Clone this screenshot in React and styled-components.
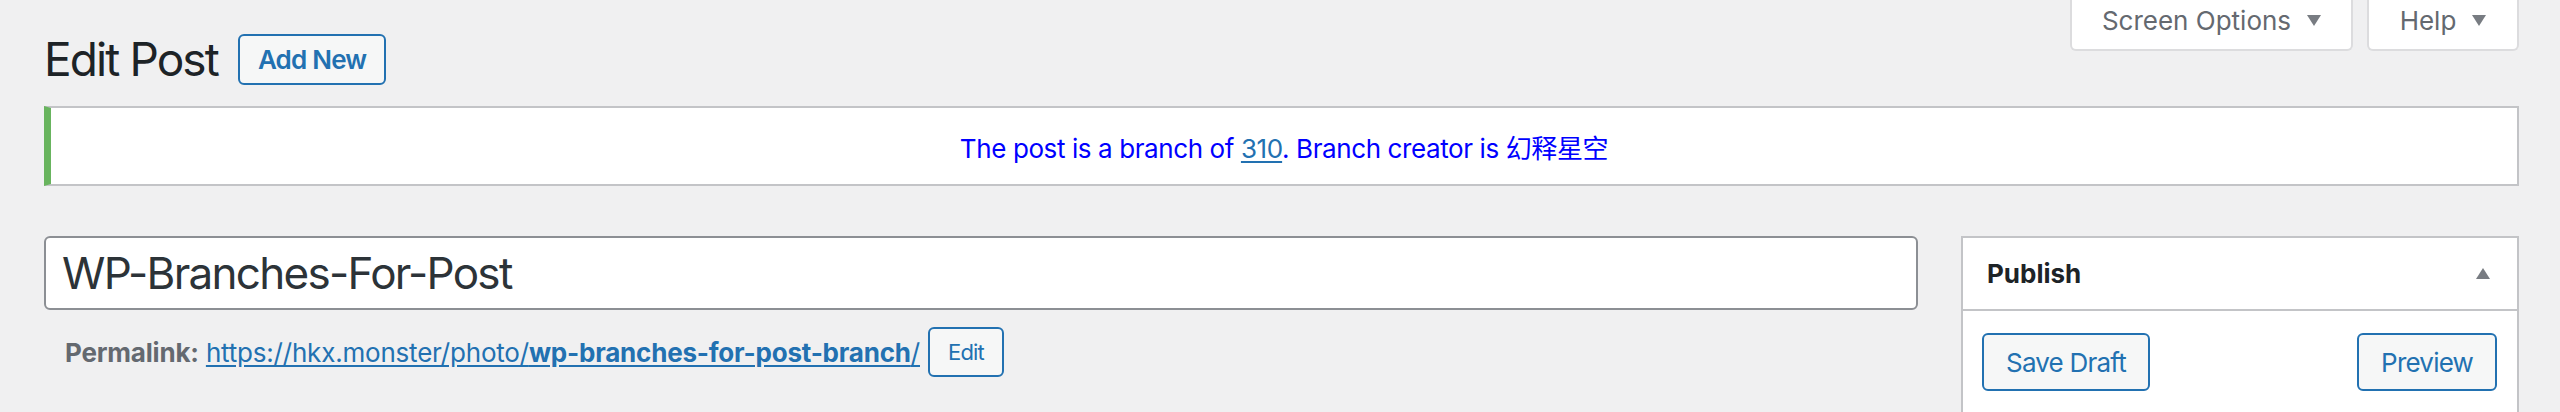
import React from "react";
import styled, { createGlobalStyle } from "styled-components";

const GlobalStyle = createGlobalStyle`
  html, body {
    margin: 0;
    padding: 0;
    background: #f0f0f1;
    font-family: Inter, "Noto Sans", "Noto Sans CJK SC", sans-serif;
    color: #1d2327;
  }
`;

const Page = styled.div`
  padding: 0 41px 40px 44px;
`;

const TopRow = styled.div`
  display: flex;
  justify-content: space-between;
  align-items: flex-start;
`;

const TitleGroup = styled.div`
  display: flex;
  align-items: center;
  gap: 20px;
  padding-top: 34px;
`;

const Heading = styled.h1`
  margin: 0;
  font-size: 46px;
  line-height: 51px;
  font-weight: 400;
  letter-spacing: -1.9px;
  color: #1d2327;
`;

const Button = styled.button`
  box-sizing: border-box;
  height: ${(p) => p.$h || 51}px;
  padding: 0 ${(p) => p.$px || 18}px;
  border: 2px solid #2271b1;
  border-radius: 6px;
  background: #f6f7f7;
  color: #2271b1;
  font-family: inherit;
  font-size: ${(p) => p.$fs || 26}px;
  font-weight: ${(p) => p.$fw || 400};
  letter-spacing: -0.8px;
  cursor: pointer;
`;

const Tabs = styled.div`
  display: flex;
  gap: 14px;
`;

const Tab = styled.div`
  box-sizing: border-box;
  height: 51px;
  width: ${(p) => p.$w}px;
  display: flex;
  align-items: center;
  justify-content: center;
  gap: 16px;
  padding-bottom: 8px;
  background: #fff;
  border: 2px solid #dcdcde;
  border-top: none;
  border-radius: 0 0 6px 6px;
  color: #646970;
  font-size: 26px;
`;

const Caret = styled.span`
  width: 0;
  height: 0;
  border-left: 7.5px solid transparent;
  border-right: 7.5px solid transparent;
  border-${(p) => (p.$up ? "bottom" : "top")}: 11px solid #787c82;
`;

const Notice = styled.div`
  box-sizing: border-box;
  margin-top: 21px;
  height: 80px;
  display: flex;
  align-items: center;
  justify-content: center;
  background: #fff;
  border: 2px solid #c3c4c7;
  border-left: 7px solid #68b45e;
  color: #0000ff;
  font-size: 26px;
  letter-spacing: -0.4px;
`;

const NoticeLink = styled.a`
  color: #2271b1;
  text-decoration: underline;
  text-underline-offset: 3px;
`;

const Body = styled.div`
  display: flex;
  gap: 43px;
  margin-top: 50px;
  align-items: flex-start;
`;

const Main = styled.div`
  flex: 1;
`;

const TitleInput = styled.div`
  box-sizing: border-box;
  height: 74px;
  display: flex;
  align-items: center;
  padding-left: 16px;
  background: #fff;
  border: 2px solid #8c8f94;
  border-radius: 6px;
  font-size: 44px;
  color: #2c3338;
  letter-spacing: -1.7px;
`;

const PermalinkRow = styled.div`
  display: flex;
  align-items: center;
  gap: 8px;
  margin-top: 17px;
  padding-left: 21px;
  font-size: 26px;
  letter-spacing: -0.2px;
`;

const Label = styled.strong`
  color: #646970;
  font-weight: 700;
`;

const Url = styled.a`
  color: #2271b1;
  text-decoration: underline;
  text-underline-offset: 3px;
  b {
    font-weight: 700;
  }
`;

const Side = styled.div`
  width: 558px;
  box-sizing: border-box;
  background: #fff;
  border: 2px solid #c3c4c7;
`;

const BoxHead = styled.div`
  height: 71px;
  display: flex;
  align-items: center;
  justify-content: space-between;
  padding: 0 27px 0 24px;
  border-bottom: 2px solid #c3c4c7;
  font-size: 26px;
  font-weight: 700;
  color: #1d2327;
`;

const BoxActions = styled.div`
  display: flex;
  justify-content: space-between;
  padding: 22px 20px 60px 19px;
`;

export default function App() {
  return (
    <>
      <GlobalStyle />
      <Page>
        <TopRow>
          <TitleGroup>
            <Heading>Edit Post</Heading>
            <Button $fw={600}>Add New</Button>
          </TitleGroup>
          <Tabs>
            <Tab $w={283}>
              Screen Options <Caret />
            </Tab>
            <Tab $w={152}>
              Help <Caret />
            </Tab>
          </Tabs>
        </TopRow>

        <Notice>
          <span>
            The post is a branch of <NoticeLink href="#">310</NoticeLink>. Branch creator is 幻释星空
          </span>
        </Notice>

        <Body>
          <Main>
            <TitleInput>WP-Branches-For-Post</TitleInput>
            <PermalinkRow>
              <span>
                <Label>Permalink:</Label>{" "}
                <Url href="#">
                  https://hkx.monster/photo/<b>wp-branches-for-post-branch</b>/
                </Url>
              </span>
              <Button $h={50} $fs={22}>Edit</Button>
            </PermalinkRow>
          </Main>

          <Side>
            <BoxHead>
              Publish <Caret $up />
            </BoxHead>
            <BoxActions>
              <Button $h={58} $px={22}>Save Draft</Button>
              <Button $h={58} $px={22}>Preview</Button>
            </BoxActions>
          </Side>
        </Body>
      </Page>
    </>
  );
}
